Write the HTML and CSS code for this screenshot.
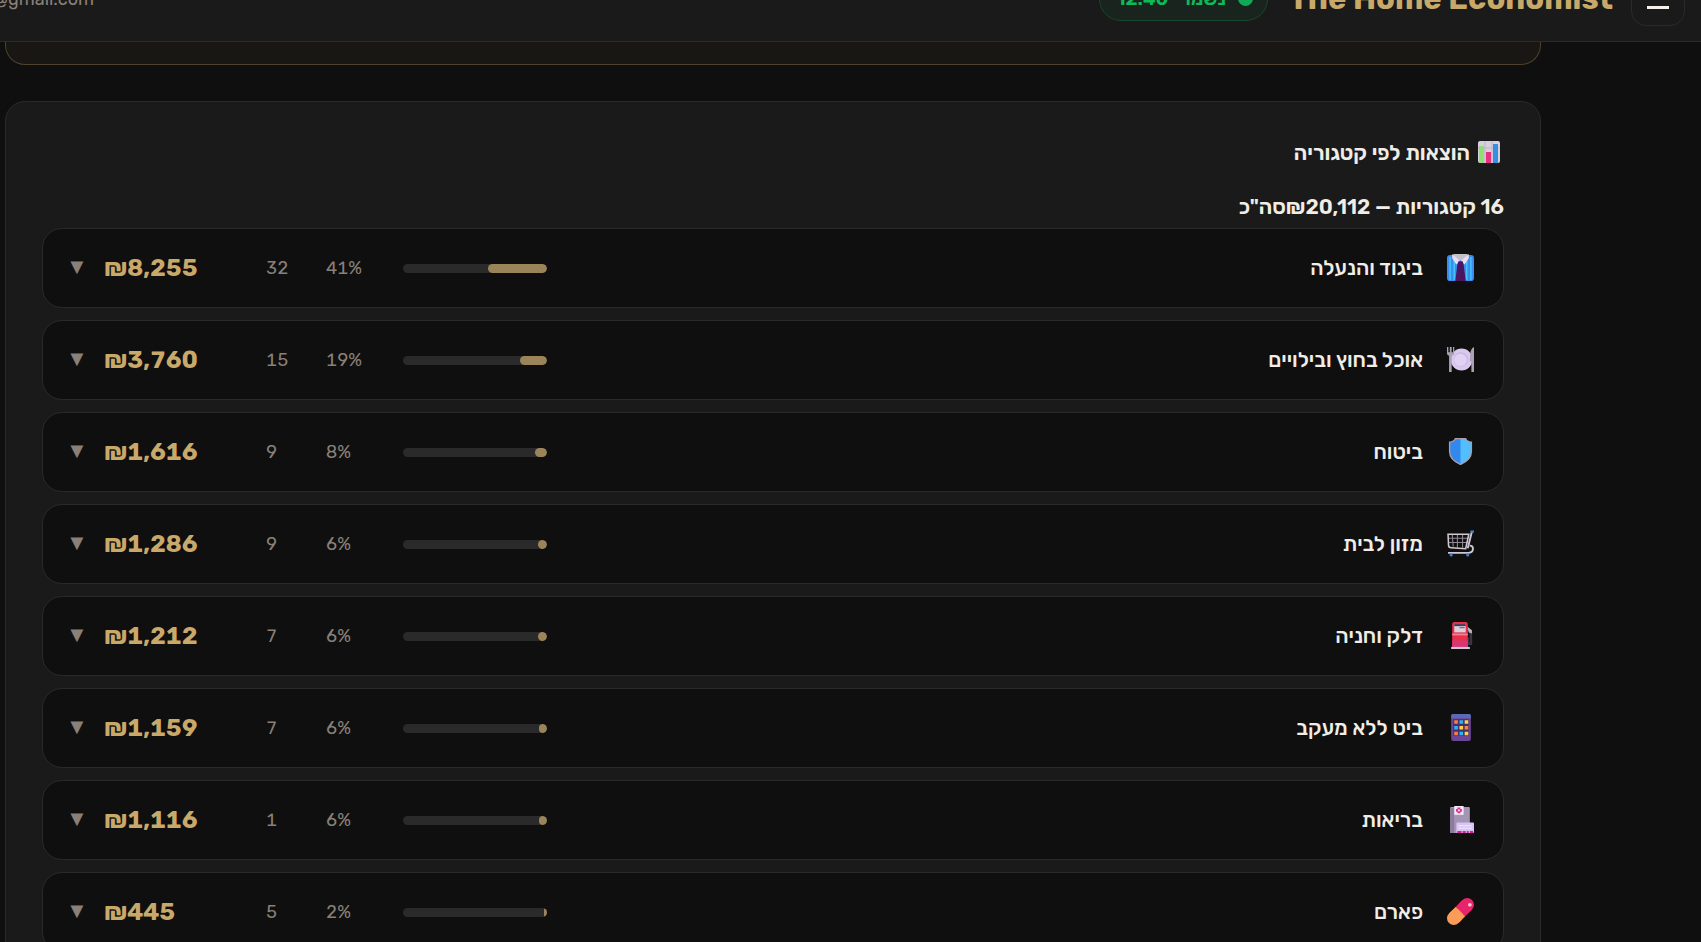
FILE: index.html
```
<!DOCTYPE html>
<html lang="he" dir="rtl">

<head>
    <meta charset="UTF-8">
    <meta name="viewport" content="width=device-width, initial-scale=1.0">
    <link rel="stylesheet" href="styles.css">
    <title>The Home Economist</title>
</head>

<body>
    <header class="topbar">
        <button class="menu-btn" type="button" aria-label="תפריט">
            <svg width="22" height="20" viewBox="0 0 22 20">
                <path d="M0 1.5h22M0 9h22M0 18.5h22" stroke="#f5f0ea" stroke-width="3" />
            </svg>
        </button>
        <div class="brand">The Home Economist</div>
        <div class="saved"><span class="saved-dot"></span><span>נשמר</span><span>12:40</span></div>
        <div class="user" dir="ltr">@gmail.com</div>
    </header>

    <main class="page">
        <section class="notice"></section>

        <section class="panel">
            <h2 class="panel-title">
                <svg class="title-icon" viewBox="0 0 22 22">
                    <rect width="22" height="22" rx="2" fill="#d8d0df" />
                    <path d="M7 0v22M14 0v22M0 7h22" stroke="#bdb4c8" stroke-width="1" />
                    <rect x="1" y="5" width="5" height="17" fill="#8fe070" />
                    <rect x="8" y="11" width="5" height="11" fill="#e8317c" />
                    <rect x="15" y="3" width="5" height="19" fill="#3590e0" />
                </svg>
                הוצאות לפי קטגוריה
            </h2>
            <p class="summary">16 קטגוריות — ₪20,112סה"כ</p>

            <div class="rows">
                <button class="row" type="button">
                    <svg class="icon" viewBox="0 0 26 26">
                        <rect y="1" width="26" height="25" rx="3" fill="#3a8df0" />
                        <path d="M3 3v22M7 5v20M19 5v20M23 3v22" stroke="#45c4fb" stroke-width="1.4" />
                        <path d="M6 0h14l-2 6h-10z" fill="#c4bfc7" />
                        <path d="M5 0l8 7-4 3-4-6zM21 0l-8 7 4 3 4-6z" fill="#eadcf3" />
                        <path d="M11 7h4l1 3 2 16H8l2-16z" fill="#4b1560" />
                    </svg>
                    <span class="name">ביגוד והנעלה</span>
                    <span class="track"><span class="fill" style="width: 41%"></span></span>
                    <span class="pct">41%</span>
                    <span class="count">32</span>
                    <span class="amount">₪8,255</span>
                    <span class="arrow">▼</span>
                </button>

                <button class="row" type="button">
                    <svg class="icon" viewBox="0 0 26 26">
                        <circle cx="14" cy="13" r="10.5" fill="#d9c9ef" />
                        <circle cx="13.5" cy="13" r="7" fill="#cbb9e6" />
                        <circle cx="13" cy="13.5" r="6" fill="#dfd2f2" />
                        <path d="M0 1v6q0 2 2 2.500V25h2.500V9.500q2.500-.5 2.500-2.500V1H5.800v5H4.500V1H2.700v5H1.300V1z" fill="#aaa2b4" />
                        <path d="M26 1q-4 1-4 12v2h1.500v10H26z" fill="#aaa2b4" />
                    </svg>
                    <span class="name">אוכל בחוץ ובילויים</span>
                    <span class="track"><span class="fill" style="width: 18.7%"></span></span>
                    <span class="pct">19%</span>
                    <span class="count">15</span>
                    <span class="amount">₪3,760</span>
                    <span class="arrow">▼</span>
                </button>

                <button class="row" type="button">
                    <svg class="icon" viewBox="0 0 26 26">
                        <path d="M8 .6h10q1 3 5.500 3.400v9q0 8-10.500 12.500Q2.500 21 2.500 13V4Q7 3.600 8 .6z" fill="#3388ee" />
                        <path d="M13 .6h5q1 3 5.500 3.400v9q0 8-10.500 12.500z" fill="#50bffb" />
                        <path d="M8 .6h10q1 3 5.500 3.400v9q0 8-10.500 12.500Q2.500 21 2.500 13V4Q7 3.600 8 .6z" fill="none" stroke="#a79dab" stroke-width="1.300" />
                    </svg>
                    <span class="name">ביטוח</span>
                    <span class="track"><span class="fill" style="width: 8%"></span></span>
                    <span class="pct">8%</span>
                    <span class="count">9</span>
                    <span class="amount">₪1,616</span>
                    <span class="arrow">▼</span>
                </button>

                <button class="row" type="button">
                    <svg class="icon" viewBox="0 0 26 26" fill="none">
                        <path d="M2 8h18M2 12h18M5 4l1 12M10 4v13M15 4v13" stroke="#8f8894" stroke-width="1" />
                        <path d="M1 4h20l-3 14L4 17Q1.500 17 1.500 15z" stroke="#cfc8d2" stroke-width="1.500" />
                        <path d="M24 1.500L20 17.500M1 22h20q4-.5 4-4 0-3-3-3" stroke="#cfc8d2" stroke-width="1.800" />
                        <path d="M22.500 1.500H26" stroke="#3b7fd0" stroke-width="2.200" />
                        <circle cx="4" cy="24" r="1.500" fill="#3b7fd0" />
                        <circle cx="20" cy="24" r="1.500" fill="#3b7fd0" />
                    </svg>
                    <span class="name">מזון לבית</span>
                    <span class="track"><span class="fill" style="width: 6.4%"></span></span>
                    <span class="pct">6%</span>
                    <span class="count">9</span>
                    <span class="amount">₪1,286</span>
                    <span class="arrow">▼</span>
                </button>

                <button class="row" type="button">
                    <svg class="icon" viewBox="0 0 26 26">
                        <path d="M20 6l3 3v12h-3v-6" fill="none" stroke="#3c3440" stroke-width="2.500" />
                        <path d="M19 4l5 4v3l-3-1z" fill="#b9b1c0" />
                        <path d="M5 2q0-2 2-2h11q2 0 2 2v23H5z" fill="#e8304c" />
                        <path d="M5 18h15v7H5z" fill="#d83575" />
                        <rect x="7" y="2" width="11" height="8" fill="#d9d0de" />
                        <path d="M7 2h11v2H7z" fill="#4a3550" />
                        <path d="M12 5.500h5" stroke="#6a5570" stroke-width="1" />
                        <path d="M5 12h15" stroke="#f37f90" stroke-width="1.800" />
                        <rect x="4" y="24" width="18" height="2" fill="#cfc6d6" />
                    </svg>
                    <span class="name">דלק וחניה</span>
                    <span class="track"><span class="fill" style="width: 6%"></span></span>
                    <span class="pct">6%</span>
                    <span class="count">7</span>
                    <span class="amount">₪1,212</span>
                    <span class="arrow">▼</span>
                </button>

                <button class="row" type="button">
                    <svg class="icon" viewBox="0 0 26 26">
                        <rect x="4" width="19" height="26" rx="2" fill="#6b4596" />
                        <path d="M4 4V2q0-2 2-2h15q2 0 2 2v2z" fill="#5a6ab8" />
                        <rect x="6" y="5" width="15" height="16" fill="#43306b" />
                        <path d="M7 6h3.500v3.500H7zM17 11.500h3.500V15H17zM7 17h3.500v3.500H7z" fill="#f58040" />
                        <path d="M12 6h3.500v3.500H12zM7 11.500h3.500V15H7zM12 17h3.500v3.500H12z" fill="#2fb0f5" />
                        <path d="M17 6h3.500v3.500H17zM12 11.500h3.500V15H12zM17 17h3.500v3.500H17z" fill="#fbd34a" />
                    </svg>
                    <span class="name">ביט ללא מעקב</span>
                    <span class="track"><span class="fill" style="width: 5.8%"></span></span>
                    <span class="pct">6%</span>
                    <span class="count">7</span>
                    <span class="amount">₪1,159</span>
                    <span class="arrow">▼</span>
                </button>

                <button class="row" type="button">
                    <svg class="icon" viewBox="0 0 26 26">
                        <rect x="3" y="1" width="19" height="25" rx="1" fill="#a595b4" />
                        <path d="M3 2h4v24H3z" fill="#8d7b9d" />
                        <rect x="7" width="9" height="8.500" fill="#f3e9f8" />
                        <path d="M11.500 1.500v5.500M8.700 4.200h5.600" stroke="#e0308a" stroke-width="2.800" />
                        <circle cx="11.500" cy="4.200" r="1" fill="#f3e9f8" />
                        <rect x="9" y="16" width="17" height="10" rx="1" fill="#d9c3f4" />
                        <path d="M11 19h13M11 21.500h13" stroke="#f2e6fd" stroke-width="1" />
                        <path d="M10 25h4M15 25h3M19 25h2M22 25h3" stroke="#d61e98" stroke-width="2" />
                    </svg>
                    <span class="name">בריאות</span>
                    <span class="track"><span class="fill" style="width: 5.5%"></span></span>
                    <span class="pct">6%</span>
                    <span class="count">1</span>
                    <span class="amount">₪1,116</span>
                    <span class="arrow">▼</span>
                </button>

                <button class="row" type="button">
                    <svg class="icon" viewBox="0 0 26 26" fill="none" stroke-width="13">
                        <path d="M6.500 19.500L9 17" stroke="#fb9c58" stroke-linecap="round" />
                        <path d="M19.500 6.500L17 9" stroke="#e8246a" stroke-linecap="round" />
                        <path d="M19.500 6.500L13 13" stroke="#e8246a" />
                        <path d="M13 13L6.500 19.500" stroke="#fb9c58" />
                        <circle cx="22" cy="6.500" r="1.800" fill="#fbc3d6" stroke="none" />
                    </svg>
                    <span class="name">פארם</span>
                    <span class="track"><span class="fill" style="width: 2.2%"></span></span>
                    <span class="pct">2%</span>
                    <span class="count">5</span>
                    <span class="amount">₪445</span>
                    <span class="arrow">▼</span>
                </button>
            </div>
        </section>
    </main>
</body>

</html>
```
FILE: styles.css
```
* {
    box-sizing: border-box;
}

body {
    height: 100vh;
    margin: 0;
    overflow: hidden;

    background-color: #0f0f0f;
    color: #f0ece6;
    font-family: Rubik, Heebo, "Open Sans", "Liberation Sans", sans-serif;
}

button {
    font-family: inherit;
    color: inherit;
    cursor: pointer;
}

/* the bar is scrolled halfway out of view */
.topbar {
    display: flex;
    align-items: center;
    height: 86px;
    margin-top: -44px;
    padding: 0 16px 0 0;
    background-color: #1a1a1a;
    border-bottom: 1px solid #2a2a2a;
}

.menu-btn {
    display: flex;
    align-items: center;
    justify-content: center;
    width: 54px;
    height: 54px;
    padding: 0;
    background: none;
    border: 1px solid #2a2a2a;
    border-radius: 15px;
}

.brand {
    margin-right: 18px;
    color: #c9a96a;
    font-size: 31px;
    font-weight: 700;
    line-height: 36px;
    white-space: nowrap;
}

.saved {
    display: flex;
    align-items: center;
    gap: 12px;
    height: 44px;
    margin-right: 21px;
    padding: 0 14px 0 16px;
    background-color: #1a241e;
    border: 1px solid #17472c;
    border-radius: 22px;
    color: #10b958;
    font-size: 19px;
    font-weight: 600;
}

.saved-dot {
    width: 15px;
    height: 15px;
    border-radius: 50%;
    background-color: #0fa958;
}

.user {
    display: flex;
    justify-content: flex-end;
    width: 94px;
    margin-right: auto;
    color: #8a8078;
    font-size: 18px;
}

.page {
    padding: 0 160px 0 5px;
}

.notice {
    height: 23px;
    margin-bottom: 36px;
    background-color: #181713;
    border: 1px solid #4f422b;
    border-top: none;
    border-radius: 0 0 20px 20px;
}

.panel {
    padding: 36px;
    background-color: #1a1a1a;
    border: 1px solid #2a2a2a;
    border-radius: 20px;
}

.panel-title {
    display: flex;
    align-items: center;
    gap: 8px;
    margin: 0 0 24px;
    padding-right: 4px;
    font-size: 21px;
    font-weight: 600;
    line-height: 30px;
}

.title-icon {
    width: 22px;
    height: 22px;
    margin-bottom: 2px;
}

.summary {
    margin: 0 0 6px;
    font-size: 21px;
    font-weight: 600;
    line-height: 30px;
}

.rows {
    display: flex;
    flex-direction: column;
    gap: 12px;
}

.row {
    display: grid;
    grid-template-columns: 38px 1fr 144px 59px 42px 144px 18px;
    align-items: center;
    gap: 18px;
    width: 100%;
    height: 80px;
    padding: 0 24px 0 25px;
    background-color: #0f0f0f;
    border: 1px solid #2a2a2a;
    border-radius: 20px;
    font-size: 18px;
    font-variant-numeric: tabular-nums;
    text-align: left;
}

.icon {
    width: 27px;
    height: 27px;
    margin: 0 0 2px;
    justify-self: center;
}

.name {
    padding-bottom: 2px;
    font-size: 21px;
    font-weight: 500;
    text-align: right;
}

.track {
    height: 9px;
    overflow: hidden;
    background-color: #2a2a2a;
    border-radius: 5px;
}

.fill {
    display: block;
    height: 100%;
    background-color: #9c845a;
    border-radius: 5px;
}

.pct,
.count,
.arrow {
    color: #8a8078;
}

.arrow {
    padding-bottom: 2px;
    font-size: 22px;
    line-height: 24px;
    justify-self: center;
}

.amount {
    color: #c9a96a;
    font-size: 24px;
    font-weight: 700;
}
```
